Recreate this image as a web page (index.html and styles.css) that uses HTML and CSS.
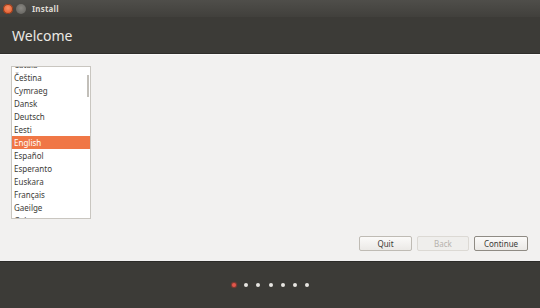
FILE: index.html
```html
<!DOCTYPE html>
<html lang="en">

<head>
    <meta charset="UTF-8">
    <title>Install</title>
    <link rel="stylesheet" href="styles.css">
</head>

<body>
    <div class="window">
        <div class="titlebar">
            <span class="win-btn close"></span>
            <span class="win-btn min"></span>
            <span class="title">Install</span>
        </div>
        <div class="header">
            <h1>Welcome</h1>
        </div>

        <div class="content">
            <div class="lang-list">
                <ul>
                    <li>Català</li>
                    <li>Čeština</li>
                    <li>Cymraeg</li>
                    <li>Dansk</li>
                    <li>Deutsch</li>
                    <li>Eesti</li>
                    <li class="selected">English</li>
                    <li>Español</li>
                    <li>Esperanto</li>
                    <li>Euskara</li>
                    <li>Français</li>
                    <li>Gaeilge</li>
                    <li>Galego</li>
                </ul>
                <div class="scrollbar"></div>
            </div>

            <div class="buttons">
                <button class="btn">Quit</button>
                <button class="btn back" disabled>Back</button>
                <button class="btn default">Continue</button>
            </div>
        </div>

        <div class="footer">
            <span class="dot active"></span>
            <span class="dot"></span>
            <span class="dot"></span>
            <span class="dot"></span>
            <span class="dot"></span>
            <span class="dot"></span>
            <span class="dot"></span>
        </div>
    </div>
</body>

</html>
```

FILE: styles.css
```css
* {
    margin: 0;
    padding: 0;
    box-sizing: border-box;
}

body {
    font-family: 'Noto Sans', 'DejaVu Sans', sans-serif;
    background: #3c3b37;
}

.window {
    width: 540px;
    height: 308px;
    display: flex;
    flex-direction: column;
}

/* title bar */
.titlebar {
    height: 17px;
    display: flex;
    align-items: center;
    padding-left: 3px;
    background: linear-gradient(#4f4e4a, #41403c);
}

.win-btn {
    width: 10px;
    height: 10px;
    border-radius: 50%;
    margin-right: 3px;
}

.win-btn.close {
    background: radial-gradient(circle at 50% 40%, #f59066, #df4a1a);
    box-shadow: inset 0 0 0 1px #8a3a1c;
}

.win-btn.min {
    background: radial-gradient(circle at 50% 40%, #8a8883, #5f5e5a);
}

.title {
    margin-left: 3px;
    font-size: 8px;
    font-weight: bold;
    color: #dfdbd2;
    letter-spacing: 0.2px;
}

.header {
    height: 37px;
    background: #3c3b37;
    padding-left: 12px;
    border-bottom: 1px solid #2f2e2b;
}

.header h1 {
    font-weight: normal;
    font-size: 14px;
    color: #ebe9e4;
    line-height: 20px;
    margin-top: 9px;
}

/* main area */
.content {
    flex: 1;
    background: #f2f1f0;
    padding: 11px 12px 10px 11px;
    display: flex;
    flex-direction: column;
    justify-content: space-between;
    border-top: 1px solid #fbfaf9;
}

.lang-list {
    width: 80px;
    height: 153px;
    background: #ffffff;
    border: 1px solid #c9c6c0;
    overflow: hidden;
    position: relative;
}

.lang-list ul {
    list-style: none;
    margin-top: -9px;
}

.lang-list li {
    height: 13px;
    line-height: 13px;
    font-size: 8px;
    color: #3c3b37;
    padding-left: 2px;
}

.lang-list li.selected {
    background: #f07746;
    color: #ffffff;
}

.scrollbar {
    position: absolute;
    right: 1px;
    top: 8px;
    width: 2px;
    height: 22px;
    background: #c2bfb9;
}

.buttons {
    display: flex;
    justify-content: flex-end;
    gap: 5px;
}

.btn {
    width: 53px;
    height: 15px;
    font-family: 'Noto Sans', 'DejaVu Sans', sans-serif;
    font-size: 8px;
    color: #3c3b37;
    background: linear-gradient(#fbfaf9, #ebe9e6);
    border: 1px solid #bfbbb4;
    border-radius: 2px;
}

.btn.back {
    width: 52px;
}

.btn:disabled {
    color: #b5b2ac;
    background: #efeeec;
    border-color: #dcd9d4;
}

.btn.default {
    width: 54px;
    border-color: #8f8b84;
}

/* progress dots */
.footer {
    height: 47px;
    background: #3c3b37;
    display: flex;
    justify-content: center;
    align-items: center;
    gap: 8.3px;
    padding-left: 1px;
    padding-bottom: 1px;
    border-top: 1px solid #2c2b28;
}

.dot {
    width: 4px;
    height: 4px;
    border-radius: 50%;
    background: #e8e6e2;
}

.dot.active {
    background: #e2574c;
    box-shadow: 0 0 1px 1px #8c3a30;
}
```
